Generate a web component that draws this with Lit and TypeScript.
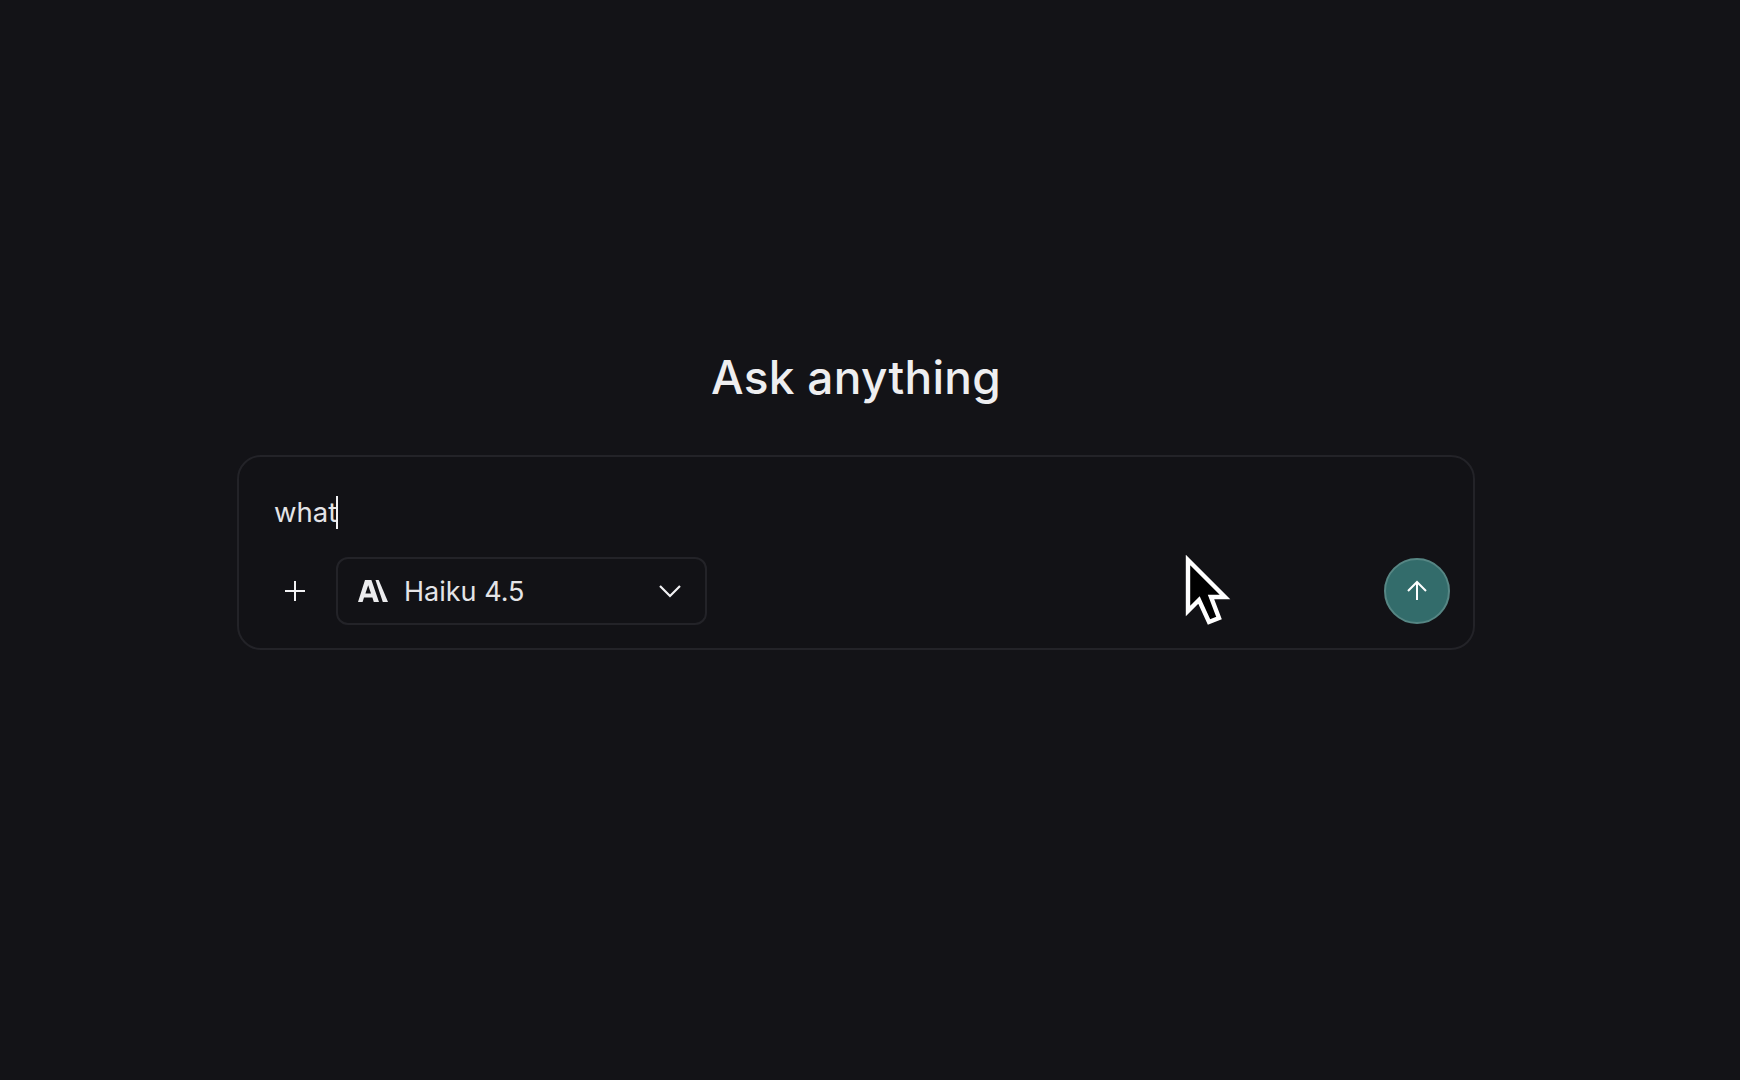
import { LitElement, html, css } from "lit";
import { customElement } from "lit/decorators.js";

@customElement("app-root")
export class AppRoot extends LitElement {
  static styles = css`
    :host {
      display: block;
      position: relative;
      width: 1740px;
      height: 1080px;
      overflow: hidden;
      box-sizing: border-box;
      background: #131317;
      font-family: Inter, "Liberation Sans", sans-serif;
      color: #f2f2f4;
    }
    .page {
      display: flex;
      flex-direction: column;
      align-items: center;
      box-sizing: border-box;
      padding: 349px 265px 0 237px;
      width: 100%;
    }
    .title {
      margin: 0;
      font-size: 46px;
      line-height: 56px;
      font-weight: 500;
      letter-spacing: 0.3px;
      color: #eeeef0;
    }
    .card {
      box-sizing: border-box;
      width: 100%;
      height: 195px;
      margin-top: 50px;
      border: 2px solid #232328;
      border-radius: 24px;
      background: #121216;
      padding: 38px 23px 22px 22px;
      display: flex;
      flex-direction: column;
    }
    .input {
      height: 34px;
      padding-left: 13px;
      display: flex;
      align-items: center;
      font-size: 27.5px;
      line-height: 34px;
      color: #e4e4e7;
    }
    .caret {
      width: 2px;
      height: 33px;
      background: #f2f2f4;
      margin-left: -1px;
    }
    .row {
      display: flex;
      align-items: center;
      margin-top: 28px;
    }
    .plus {
      width: 66px;
      height: 66px;
      display: flex;
      align-items: center;
      justify-content: center;
      margin-left: 1px;
      margin-right: 8px;
      flex: none;
    }
    .select {
      box-sizing: border-box;
      width: 371px;
      height: 68px;
      border: 2px solid #232328;
      border-radius: 12px;
      display: flex;
      align-items: center;
      padding: 0 23px 0 20px;
      font-size: 27px;
      color: #e4e4e7;
    }
    .logo {
      margin-right: 16px;
      flex: none;
    }
    .label {
      flex: 1;
      padding-top: 1px;
    }
    .send {
      margin-left: auto;
      box-sizing: border-box;
      width: 66px;
      height: 66px;
      border-radius: 50%;
      background: #336c6b;
      border: 2px solid #568684;
      display: flex;
      align-items: center;
      justify-content: center;
      flex: none;
    }
    .cursor {
      position: absolute;
      left: 1185px;
      top: 555px;
    }
  `;

  render() {
    return html`
      <div class="page">
        <h1 class="title">Ask anything</h1>
        <div class="card">
          <div class="input">what<span class="caret"></span></div>
          <div class="row">
            <div class="plus">
              <svg width="22" height="22" viewBox="0 0 22 22" fill="none" stroke="#f2f2f4" stroke-width="2">
                <path d="M11 1v20M1 11h20" />
              </svg>
            </div>
            <div class="select">
              <svg class="logo" width="30" height="22" viewBox="0 0 30 22" fill="#ececee">
                <path fill-rule="evenodd" d="M7 0h6.4L21 22h-5.2l-1.4-4.6H6L4.6 22H0L7 0Zm3.2 5.2L7.4 13.6h5.6L10.2 5.2Z" />
                <path d="M17.5 0h3.2L30 22h-5.2L17.5 0Z" />
              </svg>
              <span class="label">Haiku 4.5</span>
              <svg width="24" height="14" viewBox="0 0 24 14" fill="none" stroke="#f2f2f4" stroke-width="2.2">
                <path d="M2 2l10 10L22 2" />
              </svg>
            </div>
            <div class="send">
              <svg width="22" height="22" viewBox="0 0 22 22" fill="none" stroke="#ffffff" stroke-width="2">
                <path d="M11 20V2M2 11l9-9 9 9" />
              </svg>
            </div>
          </div>
        </div>
      </div>
      <svg class="cursor" width="50" height="72" viewBox="0 0 50 72">
        <path d="M3 5 40 42H26L34 63 24 67 14 45 3 56Z" fill="#000" stroke="#fff" stroke-width="4.4" />
      </svg>
    `;
  }
}
